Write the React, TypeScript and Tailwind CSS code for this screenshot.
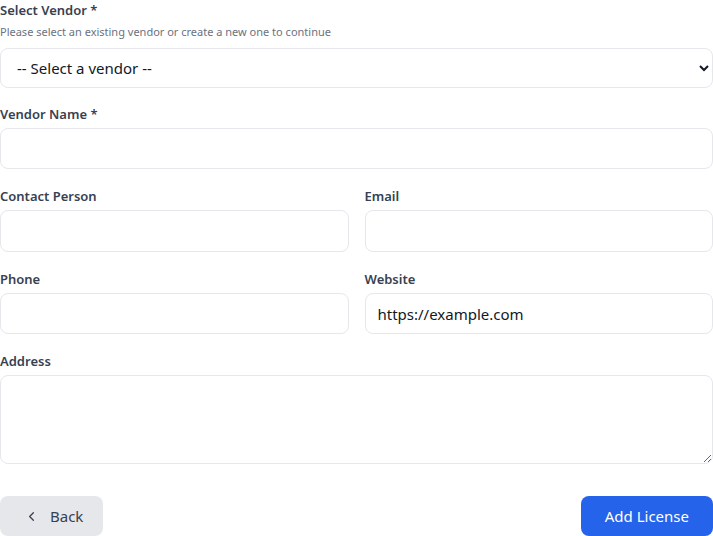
import React from 'react';
import { ChevronLeft } from 'lucide-react';

const labelCls = 'block text-[13px] leading-[18px] font-semibold text-[#374151] mb-[5px]';
const inputCls =
    'block w-full rounded-lg border border-[#e5e7eb] bg-white px-3 text-[15px] text-[#111827] focus:outline-none';

const Field = ({ label, value, className, h = 'h-[42px]' }: { label: string; value?: string; className?: string; h?: string }) => {
    return (
        <div className={className}>
            <label className={labelCls}>{label}</label>
            <input type="text" className={`${inputCls} ${h}`} defaultValue={value} />
        </div>
    );
};

const App = () => {
    return (
        <div className="w-[713px] bg-white" style={{ fontFamily: '"Noto Sans", "Open Sans", sans-serif' }}>
            <div className="pt-[1px]">
                <label className="block text-[13px] leading-[18px] font-semibold text-[#374151]">Select Vendor *</label>
                <p className="text-[11px] leading-[16px] text-[#6b7280] mt-[5px] mb-[8px]">
                    Please select an existing vendor or create a new one to continue
                </p>
                <select className="block w-full h-[40px] rounded-lg border border-[#e5e7eb] bg-white px-3 text-[15px] text-[#111827] focus:outline-none">
                    <option>-- Select a vendor --</option>
                </select>
            </div>

            <Field className="mt-[17px]" label="Vendor Name *" h="h-[41px]" />

            <div className="mt-[18px] grid grid-cols-2 gap-x-4">
                <Field label="Contact Person" />
                <Field label="Email" />
            </div>

            <div className="mt-[18px] grid grid-cols-2 gap-x-4">
                <Field label="Phone" h="h-[41px]" />
                <Field label="Website" value="https://example.com" h="h-[41px]" />
            </div>

            <div className="mt-[18px]">
                <label className={labelCls}>Address</label>
                <textarea className="block w-full h-[89px] rounded-lg border border-[#e5e7eb] bg-white px-3 py-2 text-[15px] focus:outline-none" />
            </div>

            <div className="mt-8 flex items-center justify-between pb-4">
                <button className="flex items-center gap-[11px] h-[40px] pl-6 pr-5 rounded-lg bg-[#e5e7eb] text-[15px] text-[#374151]">
                    <ChevronLeft size={15} strokeWidth={2} />
                    Back
                </button>
                <button className="h-[40px] px-6 rounded-lg bg-[#2563eb] text-[15px] text-white">Add License</button>
            </div>
        </div>
    );
};

export default App;
